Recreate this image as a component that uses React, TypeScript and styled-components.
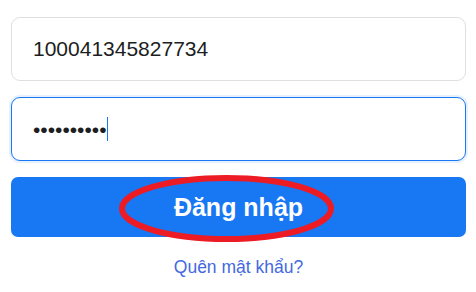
import * as React from 'react'
import styled, { createGlobalStyle } from 'styled-components'

const GlobalStyle = createGlobalStyle`
  html, body {
    margin: 0;
    padding: 0;
    background: #ffffff;
  }
  body {
    font-family: "Liberation Sans", Arial, sans-serif;
  }
`

const Form = styled.form`
  display: flex;
  flex-direction: column;
  padding: 17px 10px 0 11px;
  width: 476px;
  box-sizing: border-box;
`

const Field = styled.div<{ $focused?: boolean }>`
  display: flex;
  align-items: center;
  height: 64px;
  box-sizing: border-box;
  padding: 0 21px;
  border: 1px solid ${(p) => (p.$focused ? '#1877f2' : '#dddfe2')};
  border-radius: 9px;
  background: #fff;
  box-shadow: ${(p) => (p.$focused ? '0 0 0 2px #e7f0fd' : 'none')};
  margin-bottom: 16px;
`

const TextInput = styled.input`
  flex: 1;
  border: none;
  outline: none;
  padding: 0;
  background: transparent;
  font-family: "Liberation Sans", Arial, sans-serif;
  font-size: 21px;
  color: #1c1e21;
`

const Dots = styled.span`
  font-family: "Liberation Sans", Arial, sans-serif;
  font-size: 21px;
  color: #1c1e21;
  line-height: 1;
`

const Caret = styled.span`
  display: inline-block;
  width: 1.5px;
  height: 24px;
  background: #1877f2;
`

const ButtonWrap = styled.div`
  position: relative;
`

const LoginButton = styled.button`
  display: flex;
  align-items: center;
  justify-content: center;
  width: 100%;
  height: 60px;
  border: none;
  border-radius: 7px;
  background: #1877f2;
  color: #fff;
  font-family: "Liberation Sans", Arial, sans-serif;
  font-weight: 700;
  font-size: 25px;
  cursor: pointer;
`

const Annotation = styled.svg`
  position: absolute;
  left: 0;
  top: 0;
  width: 100%;
  height: 100%;
  overflow: visible;
  pointer-events: none;
`

const Forgot = styled.a`
  align-self: center;
  margin-top: 20px;
  font-size: 17.5px;
  color: #4369e0;
  text-decoration: none;
  line-height: 20px;
`

export default function App() {
  return (
    <>
      <GlobalStyle />
      <Form onSubmit={(e) => e.preventDefault()}>
        <Field>
          <TextInput type="text" defaultValue="100041345827734" />
        </Field>
        <Field $focused>
          <Dots>••••••••••</Dots>
          <Caret />
        </Field>
        <ButtonWrap>
          <LoginButton type="submit">Đăng nhập</LoginButton>
          <Annotation viewBox="0 0 455 60">
            <ellipse
              cx="215.5"
              cy="31.5"
              rx="104.5"
              ry="30.5"
              fill="none"
              stroke="#ed1c24"
              strokeWidth="6"
            />
          </Annotation>
        </ButtonWrap>
        <Forgot href="#">Quên mật khẩu?</Forgot>
      </Form>
    </>
  )
}
